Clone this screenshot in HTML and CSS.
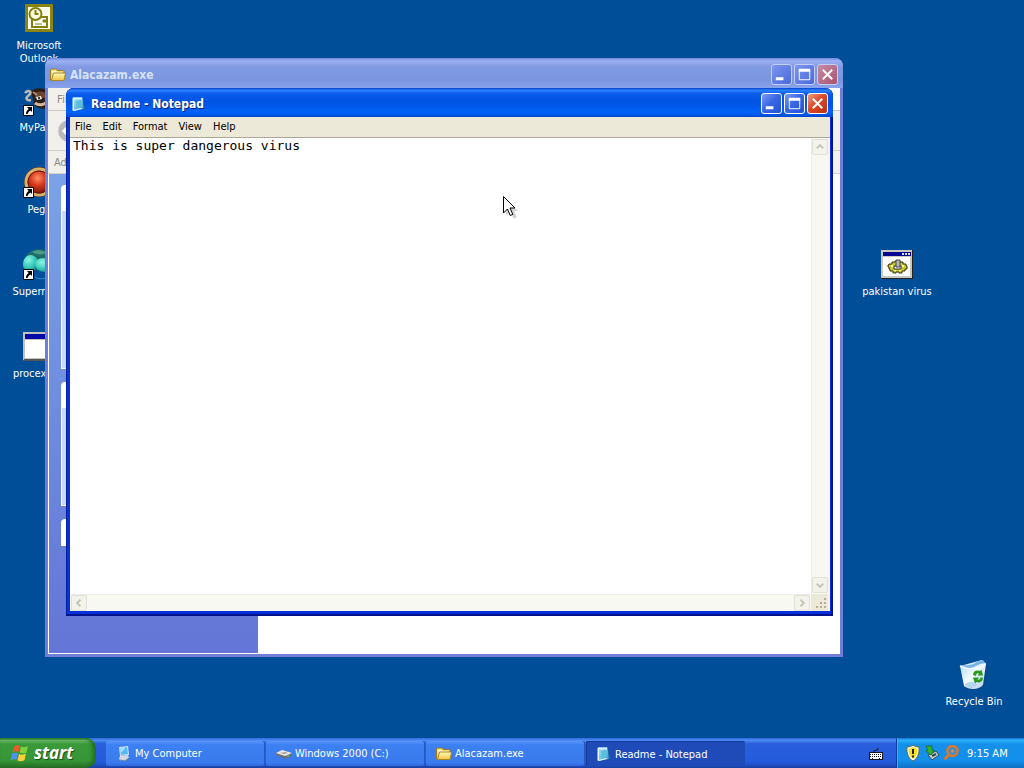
FILE: index.html
```html
<!DOCTYPE html>
<html lang="en">
<head>
<meta charset="utf-8">
<title>Desktop</title>
<link rel="stylesheet" href="styles.css">
</head>
<body>
<svg class="defs" width="0" height="0" aria-hidden="true">
  <defs>
    <linearGradient id="pad" x1="0" y1="0" x2="1" y2="1"><stop offset="0" stop-color="#a9e8fa"/><stop offset="1" stop-color="#3f9ccb"/></linearGradient>
    <linearGradient id="fold" x1="0" y1="0" x2="0" y2="1"><stop offset="0" stop-color="#fffbb8"/><stop offset="1" stop-color="#f0c545"/></linearGradient>
    <radialGradient id="red" cx=".45" cy=".35" r=".7"><stop offset="0" stop-color="#ff9068"/><stop offset=".4" stop-color="#d83a1c"/><stop offset="1" stop-color="#5c0c04"/></radialGradient>
    <radialGradient id="teal" cx=".35" cy=".3" r=".8"><stop offset="0" stop-color="#8df5e2"/><stop offset=".6" stop-color="#35c9ba"/><stop offset="1" stop-color="#0d8584"/></radialGradient>
    <linearGradient id="bin" x1="0" y1="0" x2="1" y2="1"><stop offset="0" stop-color="#a9d6fa"/><stop offset=".5" stop-color="#f2fbff"/><stop offset="1" stop-color="#a8cdea"/></linearGradient>
    <symbol id="i-pad" viewBox="0 0 16 16"><path d="M10 3l2 1 2.500 8.500-3 1.500z" fill="#1f6f9c"/><path d="M2 1.500l9.500 0 1 11.500-10.500 2z" fill="url(#pad)"/><path d="M5 5l5-1 1 6-5 2z" fill="#57bfe0"/><path d="M1.500 2h1.500v12.500H1.500z" fill="#e8fbff"/><path d="M2 1.500h9v2H2z" fill="#d3f3fb"/><path d="M2 14l8-2 1 1-8 2z" fill="#dff6f4"/></symbol>
    <symbol id="i-folder" viewBox="0 0 16 16"><path d="M.5 13V3l1-1h4l2 1.500h5.500l1 1V13z" fill="#f6dc77" stroke="#9a7a1c"/><path d="M2 4h4l1 1h5v2H2z" fill="#fff9cf"/><path d="M1.500 13.500L3.500 6h12L14 13.500z" fill="url(#fold)" stroke="#a98724"/></symbol>
    <symbol id="i-arrow" viewBox="0 0 11 11"><path d="M.5.5h10v10H.5z" fill="#fff" stroke="#000"/><path d="M4 2h5v5L7.500 5.500C5.500 6.500 5 8 4.500 9H3c0-2 .8-3.800 2.700-5z" fill="#000"/></symbol>
    <symbol id="i-recycle" viewBox="0 0 12 15"><path d="M1 6C1 3 3 1 6 1.500L8 2l1.500-1.500 1.500 6H5.500L7 4.500C5 4 4 5 4 7zM11 8.500c0 3-2 5-5 5L4.500 13 3 14.500 1 8.500h6L5.500 10.500C7 11 8 10.500 8.500 8.500z" fill="#2b9a1c"/></symbol>
  </defs>
</svg>

<main class="desktop">
  <a href="#" class="shortcut s-outlook">
    <svg viewBox="0 0 32 32"><path d="M3.500 3.500h25v25h-25z" fill="#fffff0" stroke="#8b8411" stroke-width="3"/><path d="M9 15h15v10H9z" fill="#fff" stroke="#84800f" stroke-width="2"/><circle cx="12.500" cy="12" r="6" fill="#fffde0" stroke="#84800f" stroke-width="2"/><path d="M12.500 8v4h3" fill="none" stroke="#84800f" stroke-width="2"/><path d="M12 22h7M20 18h3v2h-3z" fill="#84800f" stroke="#84800f"/></svg>
    <span>Microsoft Outlook</span>
  </a>
  <a href="#" class="shortcut s-paint">
    <svg viewBox="0 0 32 32"><path d="M8 8C12 3 22 3 28 9v13c-5 4-12 3-16 0z" fill="#2b1d18"/><path d="M12 9c3-2 8-2 12 1v4H12z" fill="#6b4430"/><path d="M2 9c3-4 8-1 4 2S3 17 8 16" fill="none" stroke="#bfbab0" stroke-width="2.500"/><path d="M13 13l5-1 1 3-5 1z" fill="#f3e9df"/><path d="M12 19c4 3 9 2 12-1" stroke="#d9b59b" stroke-width="3" fill="none"/><circle cx="16" cy="14" r="1" fill="#000"/><path d="M10 8l4 3" stroke="#b08a68" stroke-width="2"/><use href="#i-arrow" x="0" y="21" width="11" height="11"/></svg>
    <span>MyPaint</span>
  </a>
  <a href="#" class="shortcut s-peg">
    <svg viewBox="0 0 32 32"><circle cx="16" cy="16" r="15" fill="#5b3317"/><circle cx="16" cy="16" r="13" fill="url(#red)" stroke="#d5b26c" stroke-width="3"/><circle cx="16" cy="16" r="11" fill="none" stroke="#6d1409" stroke-width="1"/><use href="#i-arrow" x="0" y="21" width="11" height="11"/></svg>
    <span>Pegs</span>
  </a>
  <a href="#" class="shortcut s-nova">
    <svg viewBox="0 0 32 32"><path d="M3 8C8-1 24-1 29 8v14H3z" fill="#1b6f68"/><path d="M0 17C0 9 6 5 11 8c4 2 5 6 3 10-1 4-5 5-9 5-3-1-5-3-5-6z" fill="url(#teal)"/><path d="M14 12c5-4 13-1 17 5-3 8-11 9-17 4-2-3-2-7 0-9z" fill="url(#teal)"/><path d="M9 4c5-3 11-2 15 1-5 2-10 2-15-1z" fill="#4b9a88"/><path d="M12 29c5 3 10 2 14-1" fill="none" stroke="#2a8fd0" stroke-width="1"/><use href="#i-arrow" x="0" y="21" width="11" height="11"/></svg>
    <span>Supernova</span>
  </a>
  <a href="#" class="shortcut s-proc">
    <svg viewBox="0 0 32 32"><path d="M0 2h32v29H0z" fill="#555"/><path d="M0 2h32v27H1v1H0z" fill="#c4c2bc"/><path d="M2 4h28v5H2z" fill="#0508a4"/><path d="M2 10h28v18H2z" fill="#fff"/></svg>
    <span>procexp64</span>
  </a>
  <a href="#" class="shortcut s-virus">
    <svg viewBox="0 0 32 32"><path d="M0 2h32v29H0z" fill="#222"/><path d="M0 2h31v28H0z" fill="#cbc8c2"/><path d="M2 4h28v4H2z" fill="#060894"/><path d="M21 5h2v2h-2zM24 5h2v2h-2zM27 5h2v2h-2z" fill="#ddd"/><path d="M2 9h27v19H2z" fill="#fff"/><path d="M8 16h3v-2h3v-1h5v1h3v2h3v2h1v3h-2v2h-3v2h-3v-1h-3v1h-3v-2H9v-2H8v-2H7v-2h1z" fill="#c9c932" stroke="#33330a"/><path d="M10 17h2v2h-2zM21 17h2v2h-2zM13 22h2v1h-2zM18 22h2v1h-2z" fill="#ffff9a"/><path d="M13 18h7v3h-7z" fill="#fff" stroke="#333"/><path d="M15 12h4v7h-4z" fill="#b9b9b9" stroke="#444"/></svg>
    <span>pakistan virus</span>
  </a>
  <a href="#" class="shortcut s-bin">
    <svg viewBox="0 0 32 32"><path d="M8 30c6 3 16 1 18-3l4-19-5 2z" fill="#183c66" opacity=".5"/><path d="M2 8l22-6 4 4-3 21c-4 5-14 5-19 1z" fill="url(#bin)"/><path d="M2 8c5-1 11 0 15-3 3-2 5-3 8-3l3 4c-8 1-12 6-18 5z" fill="#79b2e6"/><path d="M2 8c6 3 11 4 16 1s6-3 10-3" fill="none" stroke="#f5fdff" stroke-width="1.500"/><ellipse cx="13" cy="27" rx="6" ry="3" fill="#b5d4ee"/><use href="#i-recycle" x="14" y="11" width="12" height="15"/></svg>
    <span>Recycle Bin</span>
  </a>

  <section class="window explorer" aria-label="Alacazam.exe">
    <header class="titlebar">
      <svg class="ico" viewBox="0 0 16 16"><use href="#i-folder"/></svg>
      <h2>Alacazam.exe</h2>
      <button class="cap" aria-label="Minimize"><svg viewBox="0 0 20 20"><path d="M4 13h8v3H4z" fill="#fff"/></svg></button>
      <button class="cap" aria-label="Maximize"><svg viewBox="0 0 20 20"><path d="M4.500 5.500h11v10h-11z" fill="none" stroke="#fff"/><path d="M4 4h12v3H4z" fill="#fff"/></svg></button>
      <button class="cap close" aria-label="Close"><svg viewBox="0 0 20 20"><path d="M5 5l10 10M15 5L5 15" stroke="#fff" stroke-width="2"/></svg></button>
    </header>
    <div class="ex-menu"><button>File</button></div>
    <div class="ex-tools"><button class="back" aria-label="Back"><svg viewBox="0 0 24 24"><circle cx="12" cy="12" r="11" fill="#b8b8b8" stroke="#ddd"/><path d="M13 6l-6 6 6 6M7 12h12" stroke="#fff" stroke-width="3" fill="none"/></svg></button></div>
    <div class="ex-address">Address</div>
    <div class="ex-body">
      <aside class="side">
        <div class="group g-a"></div>
        <div class="group g-b"></div>
        <div class="group g-c"></div>
      </aside>
      <div class="files"></div>
    </div>
  </section>

  <section class="window notepad" aria-label="Readme - Notepad">
    <header class="titlebar">
      <svg class="ico" viewBox="0 0 16 16"><use href="#i-pad"/></svg>
      <h1>Readme - Notepad</h1>
      <button class="cap" aria-label="Minimize"><svg viewBox="0 0 20 20"><path d="M4 13h8v3H4z" fill="#fff"/></svg></button>
      <button class="cap" aria-label="Maximize"><svg viewBox="0 0 20 20"><path d="M4.500 5.500h11v10h-11z" fill="none" stroke="#fff"/><path d="M4 4h12v3H4z" fill="#fff"/></svg></button>
      <button class="cap close" aria-label="Close"><svg viewBox="0 0 20 20"><path d="M5 5l10 10M15 5L5 15" stroke="#fff" stroke-width="2"/></svg></button>
    </header>
    <nav class="menu">
      <button>File</button><button>Edit</button><button>Format</button><button>View</button><button>Help</button>
    </nav>
    <div class="editor">
      <textarea aria-label="Document text" spellcheck="false">This is super dangerous virus</textarea>
      <div class="vbar">
        <button aria-label="Scroll up"><svg viewBox="0 0 15 15"><path d="M4 9l3.500-3.500L11 9" /></svg></button>
        <button aria-label="Scroll down"><svg viewBox="0 0 15 15"><path d="M4 6l3.500 3.500L11 6"/></svg></button>
      </div>
      <div class="hbar">
        <button aria-label="Scroll left"><svg viewBox="0 0 15 15"><path d="M9 4L5.500 7.500 9 11"/></svg></button>
        <button aria-label="Scroll right"><svg viewBox="0 0 15 15"><path d="M6 4l3.500 3.500L6 11"/></svg></button>
      </div>
      <svg class="grip" viewBox="0 0 17 17"><path d="M13 4h2v2h-2zM9 8h2v2H9zM13 8h2v2h-2zM5 12h2v2H5zM9 12h2v2H9zM13 12h2v2h-2z" fill="#b9ae94"/></svg>
    </div>
  </section>

  <svg class="pointer" viewBox="0 0 16 24" aria-hidden="true"><path d="M3 3v17l4-4 4 7 3-2-3-6h4z" fill="#888" opacity=".35"/><path d="M.5.5v16.500l4-4 2.700 6.500 2.600-1.100L7 12h5z" fill="#fff" stroke="#000"/></svg>
</main>

<footer class="taskbar">
  <button class="start">
    <svg viewBox="0 0 20 20"><path d="M4 4c2-2 4-2 6-1L8.500 9c-2-1-4-1-6 .5z" fill="#ef5a2a"/><path d="M11 3.500c2 1 4 1 7-.5l-1.500 6.500c-2 1-5 1-7 0z" fill="#7fd03c"/><path d="M2 11c2-1.500 4-1.500 6-.5L6.500 17c-2-1-4-1-6 .5z" fill="#4c92f4"/><path d="M9 11c2 1 4 1 7-.5L14.500 17c-2 1.500-5 1.500-7 .5z" fill="#fbd034"/></svg>
    start
  </button>
  <nav class="tasks">
    <button><svg viewBox="0 0 16 16"><path d="M3 1l9-1 1 9-9 1z" fill="#d5e2f0"/><path d="M4 2l7-1 1 7-7 1z" fill="#57b9f2"/><path d="M4 2l6-1-5 6z" fill="#a7e1ff"/><path d="M4 10l8-1 1 3-4 3H5l-2-2z" fill="#d3d7de"/><path d="M4 14l5 1 4-3" fill="none" stroke="#587caa"/></svg>My Computer</button>
    <button><svg viewBox="0 0 16 16"><path d="M0 7l6-3 10 3v3l-7 3-9-4z" fill="#6c7078"/><path d="M0 7l6-3 10 3-7 3z" fill="#e9eaec"/><path d="M4 7l5-1 3 1-4 1z" fill="#b2958b"/><path d="M11 10h2" stroke="#63e463"/></svg>Windows 2000 (C:)</button>
    <button><svg viewBox="0 0 16 16"><use href="#i-folder"/></svg>Alacazam.exe</button>
    <button class="active"><svg viewBox="0 0 16 16"><use href="#i-pad"/></svg>Readme - Notepad</button>
  </nav>
  <button class="kbd" aria-label="Keyboard"><svg viewBox="0 0 14 12"><path d="M5 4V2.500h3V1h2" fill="none" stroke="#1a1a35"/><path d="M0 4h14v8H0z" fill="#15152a"/><path d="M1 5h12v6H1z" fill="#fff"/><path d="M1 6.500h12M1 8.500h12" stroke="#15152a" stroke-dasharray="1 1"/><path d="M3 10.500h1M10 10.500h1" stroke="#15152a"/></svg></button>
  <div class="tray">
    <button aria-label="Security alert"><svg viewBox="0 0 16 16"><path d="M8 0c2 1.500 4 2 6 2 .5 6-1 11-6 14C3 13 1.500 8 2 2c2 0 4-.5 6-2z" fill="#fff" stroke="#6c6632"/><path d="M8 2c1.500 1 3 1.500 4.500 1.500 0 5-1 8-4.500 10.500C4.500 11.500 3.500 8.500 3.500 3.500 5 3.500 6.500 3 8 2z" fill="#f5df24"/><path d="M7 4h2v5H7zM7 10.500h2v2H7z" fill="#222"/></svg></button>
    <button aria-label="Safely remove hardware"><svg viewBox="0 0 16 16"><path d="M4 10l8-4 3 4-7 5z" fill="#c3ccc8" stroke="#314c50"/><path d="M8 11l4-2" stroke="#314c50" stroke-width="2"/><path d="M2 1l6 0v4l2 0-3 5-5-4 2-1z" fill="#35b32b" stroke="#176320" stroke-width=".7"/></svg></button>
    <button aria-label="Search"><svg viewBox="0 0 16 16"><circle cx="9.500" cy="6" r="5" fill="#3e8fcf" stroke="#d9782a" stroke-width="2.500"/><path d="M6 9.500L1.500 14.500" stroke="#d9782a" stroke-width="3"/><circle cx="9.500" cy="6" r="1.500" fill="#de8b45"/></svg></button>
    <time>9:15 AM</time>
  </div>
</footer>
</body>
</html>
```
FILE: styles.css
```css
* { box-sizing: border-box; }

body {
  margin: 0;
  min-height: 100vh;
  display: flex;
  flex-direction: column;
  background: #004e98;
  font: 11px/13px "DejaVu Sans Condensed", "DejaVu Sans", sans-serif;
  overflow: hidden;
}

button {
  font: inherit;
  color: inherit;
  background: none;
  border: 0;
  padding: 0;
  margin: 0;
}

svg { display: block; flex: none; }
.defs { position: absolute; }

.desktop {
  flex: 1;
  position: relative;
  overflow: hidden;
}

/* Desktop shortcuts */
.shortcut {
  position: absolute;
  width: 78px;
  display: flex;
  flex-direction: column;
  align-items: center;
  gap: 5px;
  color: #fff;
  text-align: center;
  text-decoration: none;
}
.shortcut svg { width: 32px; height: 32px; }
.s-outlook { left: 0; top: 2px; }
.s-paint { left: 0; top: 84px; }
.s-peg { left: 0; top: 166px; }
.s-nova { left: 0; top: 248px; }
.s-proc { left: 0; top: 330px; }
.s-virus { right: 88px; top: 248px; }
.s-bin { right: 11px; bottom: 30px; }

/* Windows */
.window {
  position: absolute;
  display: flex;
  flex-direction: column;
  border-radius: 8px 8px 0 0;
  overflow: hidden;
}
.titlebar {
  flex: none;
  display: flex;
  align-items: center;
  gap: 2px;
  color: #fff;
}
.titlebar h1,
.titlebar h2 {
  flex: 1;
  margin: 0;
  padding-left: 2px;
  font-size: 12px;
  line-height: 16px;
}
.ico { width: 16px; height: 16px; }

.cap {
  width: 21px;
  height: 21px;
  border: 1px solid #fff;
  border-radius: 3px;
  background: linear-gradient(135deg, #7c9cf4, #3a68e4 45%, #2450d4);
}
.cap.close { background: linear-gradient(135deg, #f0a08a, #dc4a28 45%, #b93010); }

.explorer {
  left: 45px;
  right: 181px;
  top: 58px;
  bottom: 81px;
  padding: 0 3px 3px;
  background: #6f7fd8;
}
.explorer .titlebar {
  height: 30px;
  margin: 0 -3px;
  padding: 3px 5px 0;
  background: linear-gradient(#7088dd, #9cb0f3 10%, #8099e2 30%, #7b96e0 75%, #88a2ec);
}
.explorer h2 { color: #d5e2fb; }
.explorer .cap {
  border-color: #c3cff5;
  background: linear-gradient(135deg, #7d96ec, #4a68dd);
}
.explorer .cap.close { background: linear-gradient(135deg, #c58da8, #a8526a); }

.ex-menu,
.ex-tools,
.ex-address {
  flex: none;
  display: flex;
  align-items: center;
  background: #f1f0ea;
  color: #8a8a88;
}
.ex-menu {
  height: 23px;
  padding-left: 9px;
  border-bottom: 1px solid #c9c7bd;
  background: linear-gradient(90deg, #f1f0ea 95%, #fff 95%);
}
.ex-tools { height: 40px; padding-left: 9px; border-bottom: 1px solid #d3d1c7; }
.ex-address { height: 23px; padding-left: 6px; border-bottom: 1px solid #d3d1c7; }
.back svg { width: 24px; height: 24px; }

.ex-body {
  flex: 1;
  display: flex;
  border: solid #fff;
  border-width: 0 0 1px 1px;
}
.side {
  width: 209px;
  padding: 11px 12px;
  display: flex;
  flex-direction: column;
  gap: 13px;
  background: linear-gradient(#7ba2e7, #6375d6);
}
.group {
  border: 1px solid #fff;
  border-top-width: 26px;
  border-radius: 4px 4px 0 0;
  background: #ccd9f6;
}
.g-a { height: 184px; }
.g-b { height: 124px; }
.g-c { height: 26px; }
.files { flex: 1; background: #fff; }

.notepad {
  left: 66px;
  right: 191px;
  top: 88px;
  bottom: 122px;
  padding: 0 3px 5px 4px;
  background: #0831d9;
  box-shadow: inset -2px -2px #00138c, inset 1px 0 #001ea0;
}
.notepad .titlebar {
  height: 29px;
  margin: 0 -3px 0 -4px;
  padding: 2px 5px 0 4px;
  background: linear-gradient(#0842c8, #2a80ff 8%, #0a5cea 20%, #0054e3 50%, #0062fa 85%, #0046cc);
}
.notepad h1 { text-shadow: 1px 1px #0a2a80; }
.notepad .ico { margin: 0 0 0 1px; }

.menu {
  flex: none;
  height: 21px;
  padding: 0 5px 2px;
  display: flex;
  align-items: center;
  gap: 11px;
  background: #ece9d8;
  border-bottom: 1px solid #aca899;
  color: #000;
}

.editor {
  flex: 1;
  min-height: 0;
  display: grid;
  grid-template: 1fr 17px / 1fr 17px;
  background: #f3f2ec;
  border-right: 2px solid #f7f6ee;
}
textarea {
  width: 100%;
  height: 100%;
  border: 0;
  margin: 0;
  padding: 0 3px;
  resize: none;
  overflow: hidden;
  outline: 0;
  background: #fff;
  color: #000;
  font: 13px/16px "DejaVu Sans Mono", monospace;
}
.vbar,
.hbar {
  display: flex;
  justify-content: space-between;
  background: #f8f8f3;
  border: 0 solid #eeede5;
}
.vbar { flex-direction: column; border-left-width: 1px; padding: 1px 0; }
.hbar { border-top-width: 1px; padding: 0 1px; }
.vbar button,
.hbar button {
  width: 16px;
  height: 16px;
  border: 1px solid #e2e1d8;
  border-radius: 2px;
  background: #f3f2eb;
}
.vbar path,
.hbar path { fill: none; stroke: #c4c3ba; stroke-width: 2; }
.grip { width: 17px; height: 17px; background: #ece9d8; }

.pointer {
  position: absolute;
  left: 503px;
  top: 196px;
  width: 16px;
  height: 24px;
}

/* Taskbar */
.taskbar {
  flex: none;
  height: 30px;
  display: flex;
  align-items: stretch;
  color: #fff;
  background: linear-gradient(#3168d5, #4a8cf5 8%, #2a5fdd 18%, #245bdb 80%, #1941a5);
}
.start {
  width: 96px;
  display: flex;
  align-items: center;
  gap: 4px;
  padding: 0 0 0 10px;
  border-radius: 0 10px 10px 0;
  background: linear-gradient(#2d7a2d, #6cbc6a 8%, #3a9a3a 20%, #379637 75%, #256f25);
  box-shadow: inset -3px 0 4px #226a22;
  font: italic bold 17px/20px "Open Sans", sans-serif;
  text-shadow: 1px 1px 1px #174d17;
}
.start svg { width: 20px; height: 20px; }
.tasks {
  flex: 1;
  display: flex;
  gap: 1px;
  padding: 3px 0 2px 10px;
}
.tasks button {
  flex: 0 1 159px;
  display: flex;
  align-items: center;
  gap: 3px;
  padding: 0 10px;
  border-radius: 2px;
  white-space: nowrap;
  background: linear-gradient(#5a97fa, #3c80f2 15%, #3a7bee 85%, #316ade);
  box-shadow: inset -1px 0 #2456c4;
}
.tasks svg { width: 16px; height: 16px; }
.tasks .active {
  padding-top: 1px;
  background: #1e4bb8;
  box-shadow: inset 1px 1px #153a94;
}
.kbd { padding: 1px 13px 0 0; }
.kbd svg { width: 14px; height: 12px; }
.tray {
  flex: 0 0 128px;
  display: flex;
  align-items: center;
  gap: 3px;
  padding-left: 8px;
  border-left: 1px solid #0b3f9b;
  background: linear-gradient(#1273d8, #2cb0f8 8%, #1490ea 20%, #1390ec 75%, #0f70c4);
  box-shadow: inset 1px 0 #33b5f8;
}
.tray svg { width: 16px; height: 16px; }
.tray time { padding-left: 5px; }
```
